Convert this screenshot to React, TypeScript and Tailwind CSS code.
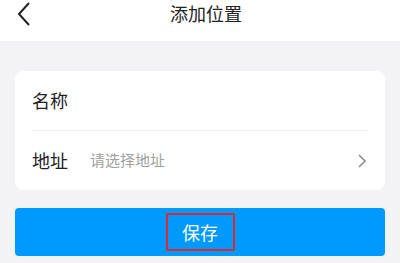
export default function App() {
  const font = { fontFamily: '"Noto Sans CJK SC", "Noto Sans", sans-serif' };
  return (
    <div className="w-[400px] h-[263px] bg-[#f2f2f7] overflow-hidden" style={font}>
      <header className="relative h-[41px] bg-white flex items-center justify-center">
        <svg
          className="absolute left-[16px] top-[2px]"
          width="16"
          height="24"
          viewBox="0 0 16 24"
          fill="none"
          stroke="#222"
          strokeWidth="2"
        >
          <path d="M13 1 L3 12 L13 23" />
        </svg>
        <h1 className="text-[18px] leading-none text-[#222] -mt-[15px] ml-[12px]">添加位置</h1>
      </header>

      <main className="px-[15px] pt-[30px]">
        <div className="bg-white rounded-[8px] px-[17px]">
          <div className="h-[60px] flex items-center border-b border-[#eeeeee]">
            <span className="text-[18px] text-[#222]">名称</span>
          </div>
          <div className="h-[59px] flex items-center">
            <span className="text-[18px] text-[#222] w-[58px]">地址</span>
            <span className="text-[15px] text-[#a0a0a0] flex-1">请选择地址</span>
            <svg width="10" height="16" viewBox="0 0 10 16" fill="none" stroke="#888" strokeWidth="1.5" className="mr-[1px]">
              <path d="M2 2 L8 8 L2 14" />
            </svg>
          </div>
        </div>

        <button className="mt-[18px] w-full h-[48px] rounded-[4px] bg-[#0099fe] flex items-center justify-center">
          <span className="border-2 border-[#e0282e] rounded-[2px] w-[69px] h-[38px] flex items-center justify-center text-white text-[18px]">
            保存
          </span>
        </button>
      </main>
    </div>
  );
}
